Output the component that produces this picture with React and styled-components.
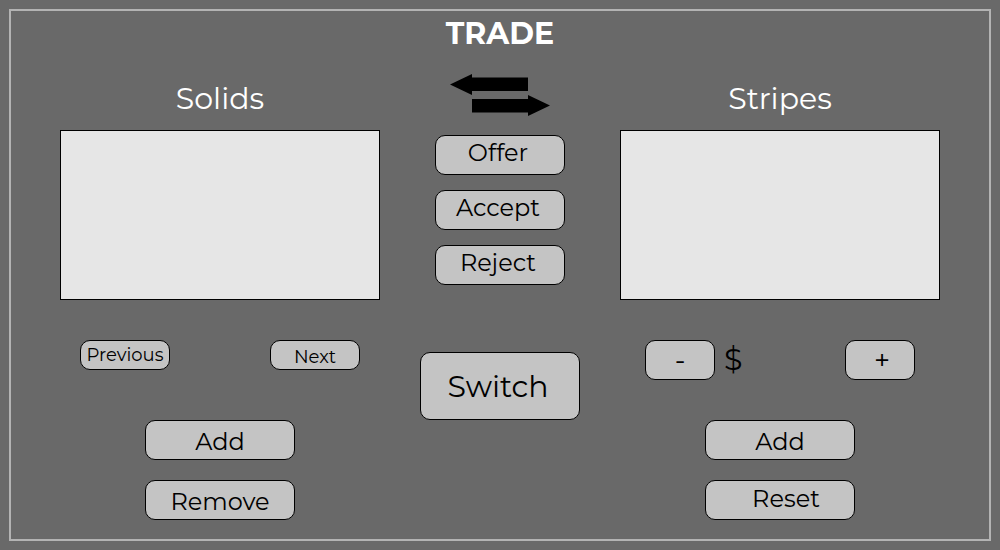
import React from "react";
import styled, { createGlobalStyle } from "styled-components";

const GlobalStyle = createGlobalStyle`
  * { box-sizing: border-box; }
  body {
    margin: 0;
    background: #696969;
    color: #000;
    font-family: Montserrat, Inter, "Open Sans", sans-serif;
    font-weight: 400;
  }
`;

const Page = styled.div`
  display: flex;
  min-height: 100vh;
  padding: 9px;
`;

const Frame = styled.main`
  flex: 1;
  border: 2px solid #b3b3b3;
  padding: 0 49px 19px;
`;

const Title = styled.h1`
  margin: 0 0 13px;
  font-size: 30px;
  font-weight: 700;
  line-height: 46px;
  text-align: center;
  color: #fff;
`;

const Columns = styled.div`
  display: grid;
  grid-template-columns: 2fr 1fr 2fr;
  column-gap: 40px;
`;

const Side = styled.section`
  display: flex;
  flex-direction: column;
`;

const TeamName = styled.h2`
  margin: 0;
  padding-bottom: 2px;
  font-size: 30px;
  font-weight: 400;
  line-height: 58px;
  text-align: center;
  color: #fff;
`;

const Panel = styled.div`
  height: 170px;
  border: 1px solid #000;
  background: #e6e6e6;
`;

const ControlRow = styled.div`
  display: flex;
  align-items: center;
  gap: 9px;
  height: 40px;
  margin: ${(p) => p.$margin};
  padding: 0 ${(p) => p.$inset}px;
`;

const Spacer = styled.span`
  flex: 1;
`;

const Actions = styled.div`
  display: flex;
  flex-direction: column;
  align-items: center;
  gap: 20px;
`;

const Middle = styled.section`
  display: flex;
  flex-direction: column;
  align-items: center;
`;

const Decisions = styled.div`
  display: flex;
  flex-direction: column;
  gap: 15px;
  margin: 19px 0 67px;
`;

const sizes = {
  small: { width: "90px", height: "30px", font: "18px" },
  square: { width: "70px", height: "40px", font: "28px" },
  choice: { width: "130px", height: "40px", font: "24px" },
  action: { width: "150px", height: "40px", font: "24px" },
  large: { width: "100%", height: "68px", font: "30px" },
};

const Button = styled.button`
  width: ${(p) => sizes[p.$size].width};
  height: ${(p) => sizes[p.$size].height};
  padding: ${(p) => p.$pad || "0"};
  border: 1px solid #000;
  border-radius: 10px;
  background: #c4c4c4;
  color: #000;
  font-family: inherit;
  font-weight: 400;
  font-size: ${(p) => sizes[p.$size].font};
  line-height: 28px;
  cursor: pointer;
`;

const Currency = styled.span`
  font-size: 30px;
  line-height: 36px;
`;

const Arrows = styled.svg`
  display: block;
  width: 100px;
  height: 42px;
  margin-top: 4px;
`;

export default function App() {
  return (
    <Page>
      <GlobalStyle />
      <Frame>
        <Title>TRADE</Title>
        <Columns>
          <Side>
            <TeamName>Solids</TeamName>
            <Panel />
            <ControlRow $margin="35px 0 45px" $inset={20}>
              <Button $size="small">Previous</Button>
              <Spacer />
              <Button $size="small" $pad="2px 0 0">Next</Button>
            </ControlRow>
            <Actions>
              <Button $size="action" $pad="4px 0 0">Add</Button>
              <Button $size="action" $pad="4px 0 0">Remove</Button>
            </Actions>
          </Side>
          <Middle>
            <Arrows viewBox="0 0 100 42" aria-hidden="true">
              <path d="M0 10.5 22 0V3.5H78V17H22V21Z" />
              <path d="M100 31.5 78 21V25H22V38.5H78V42Z" />
            </Arrows>
            <Decisions>
              <Button $size="choice" $pad="0 4px 4px 0">Offer</Button>
              <Button $size="choice" $pad="0 4px 4px 0">Accept</Button>
              <Button $size="choice" $pad="0 4px 4px 0">Reject</Button>
            </Decisions>
            <Button $size="large" $pad="2px 4px 0 0">Switch</Button>
          </Middle>
          <Side>
            <TeamName>Stripes</TeamName>
            <Panel />
            <ControlRow $margin="40px 0" $inset={25}>
              <Button $size="square" aria-label="Decrease">-</Button>
              <Currency>$</Currency>
              <Spacer />
              <Button $size="square" $pad="0 0 0 4px" aria-label="Increase">+</Button>
            </ControlRow>
            <Actions>
              <Button $size="action" $pad="4px 0 0">Add</Button>
              <Button $size="action" $pad="0 0 2px 12px">Reset</Button>
            </Actions>
          </Side>
        </Columns>
      </Frame>
    </Page>
  );
}
